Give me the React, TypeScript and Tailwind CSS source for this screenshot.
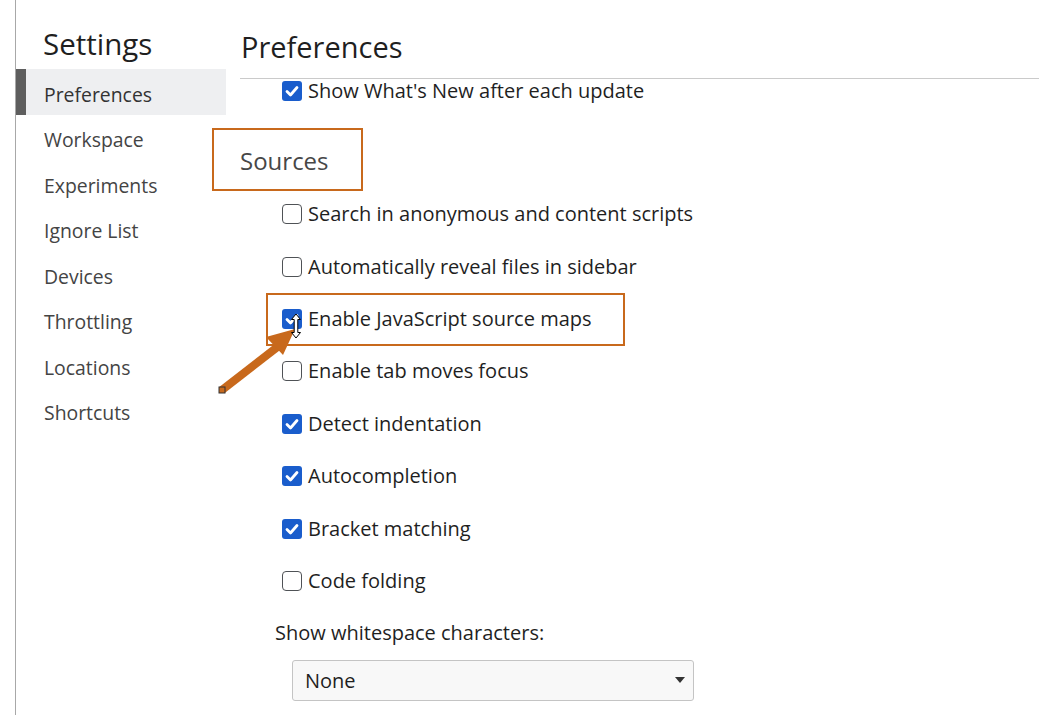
import React from "react";

const font = { fontFamily: '"Open Sans", "Noto Sans", sans-serif' };

function Check({ checked }: { checked: boolean }) {
  if (checked) {
    return (
      <span className="w-[20px] h-[20px] rounded-[3px] bg-[#1a5dcc] flex items-center justify-center shrink-0">
        <svg width="16" height="16" viewBox="0 0 16 16">
          <path d="M3 8.5 L6.5 12 L13 4.5" fill="none" stroke="white" strokeWidth="2.8" strokeLinecap="round" strokeLinejoin="round" />
        </svg>
      </span>
    );
  }
  return <span className="w-[20px] h-[20px] rounded-[4px] border-[1.5px] border-[#4f5256] bg-white shrink-0" />;
}

function Row({ checked, label }: { checked: boolean; label: string }) {
  return (
    <div className="h-[52.4px] flex items-center pl-[42px] gap-[6px]">
      <Check checked={checked} />
      <span className="text-[20px] text-[#1f1f1f] leading-none">{label}</span>
    </div>
  );
}

const navItems = ["Preferences", "Workspace", "Experiments", "Ignore List", "Devices", "Throttling", "Locations", "Shortcuts"];

export default function App() {
  return (
    <div className="w-[1039px] h-[715px] bg-white relative overflow-hidden flex" style={font}>
      <div className="w-[15px] shrink-0" />
      <div className="w-[211px] shrink-0 border-l border-[#a8a8a8] flex flex-col">
        <div className="h-[69px] pl-[27px] pt-[24px] text-[29.5px] leading-[40px] text-[#1f1f1f]">Settings</div>
        {navItems.map((n, i) => (
          <div
            key={n}
            className={
              i === 0
                ? "h-[45.5px] flex items-center pt-[5px] bg-[#eeeff1] border-l-[10px] border-[#5e5e5e] pl-[18px] text-[19.4px] text-[#333333]"
                : "h-[45.5px] flex items-center pt-[5px] pl-[28px] text-[19.4px] text-[#444444]"
            }
          >
            {n}
          </div>
        ))}
      </div>
      <div className="flex-1 flex flex-col pl-[14px]">
        <div className="h-[79px] border-b border-[#cacaca] pt-[27px] pl-[1px] text-[29px] leading-[40px] text-[#1f1f1f]">Preferences</div>
        <div className="h-[24px] flex items-center pl-[42px] gap-[6px]">
          <Check checked />
          <span className="text-[20px] text-[#1f1f1f] leading-none">Show What's New after each update</span>
        </div>
        <div className="h-[85px] pt-[42px] text-[24px] leading-[32px] text-[#474747]">Sources</div>
        <Row checked={false} label="Search in anonymous and content scripts" />
        <Row checked={false} label="Automatically reveal files in sidebar" />
        <Row checked label="Enable JavaScript source maps" />
        <Row checked={false} label="Enable tab moves focus" />
        <Row checked label="Detect indentation" />
        <Row checked label="Autocompletion" />
        <Row checked label="Bracket matching" />
        <Row checked={false} label="Code folding" />
        <div className="h-[52.4px] flex items-center pl-[35px] text-[20px] text-[#1f1f1f]">Show whitespace characters:</div>
        <div className="pl-[52px]">
          <div className="w-[402px] h-[41px] border border-[#c4c4c4] rounded-[3px] bg-[#f8f8f8] flex items-center justify-between pl-[12px] pr-[8px]">
            <span className="text-[20px] text-[#1f1f1f] pt-[2px]">None</span>
            <svg width="10" height="6" viewBox="0 0 10 6">
              <path d="M0 0 L10 0 L5 6 Z" fill="#333" />
            </svg>
          </div>
        </div>
      </div>

      {/* annotation boxes */}
      <div className="absolute left-[212px] top-[128px] w-[151px] h-[63px] border-[2.5px] border-[#c8691c]" />
      <div className="absolute left-[266px] top-[293px] w-[359px] h-[53px] border-[2.5px] border-[#c8691c]" />
      <svg className="absolute left-0 top-0" width="1039" height="715" viewBox="0 0 1039 715">
        <line x1="222" y1="390" x2="280" y2="345" stroke="#c8691c" strokeWidth="8" />
        <polygon points="295,329 266,337 283,355" fill="#c8691c" />
        <rect x="219" y="387" width="6" height="6" fill="#c8691c" stroke="#333" strokeWidth="1" />
        <g transform="translate(296 326)">
          <path d="M0 -12 L-4.5 -6.5 L-1.8 -6.5 L-1.8 6.5 L-4.5 6.5 L0 12 L4.5 6.5 L1.8 6.5 L1.8 -6.5 L4.5 -6.5 Z" fill="white" stroke="black" strokeWidth="1" />
        </g>
      </svg>
    </div>
  );
}
